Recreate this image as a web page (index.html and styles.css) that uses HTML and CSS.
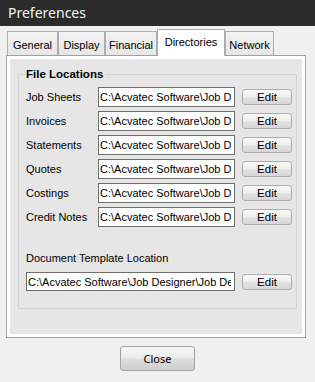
FILE: index.html
```html
<!DOCTYPE html>
<html>
<head>
  <title>Preferences</title>
  <link rel="stylesheet" href="styles.css">
</head>
<body>
  <div class="titlebar">Preferences</div>

  <!-- Tab strip -->
  <div class="tabs">
    <div class="tab tab-general">General</div>
    <div class="tab tab-display">Display</div>
    <div class="tab tab-financial">Financial</div>
    <div class="tab tab-directories active">Directories</div>
    <div class="tab tab-network">Network</div>
  </div>

  <!-- Directories page -->
  <div class="page">
    <div class="page-inner">
      <fieldset class="group">
        <legend>File Locations</legend>

        <div class="paths">
          <label for="jobSheets">Job Sheets</label>
          <input type="text" id="jobSheets" class="path" value="C:\Acvatec Software\Job Designer\Job Sheets">
          <button class="edit">Edit</button>

          <label for="invoices">Invoices</label>
          <input type="text" id="invoices" class="path" value="C:\Acvatec Software\Job Designer\Invoices">
          <button class="edit">Edit</button>

          <label for="statements">Statements</label>
          <input type="text" id="statements" class="path" value="C:\Acvatec Software\Job Designer\Statements">
          <button class="edit">Edit</button>

          <label for="quotes">Quotes</label>
          <input type="text" id="quotes" class="path" value="C:\Acvatec Software\Job Designer\Quotes">
          <button class="edit">Edit</button>

          <label for="costings">Costings</label>
          <input type="text" id="costings" class="path" value="C:\Acvatec Software\Job Designer\Costings">
          <button class="edit">Edit</button>

          <label for="creditNotes">Credit Notes</label>
          <input type="text" id="creditNotes" class="path" value="C:\Acvatec Software\Job Designer\Credit Notes">
          <button class="edit">Edit</button>
        </div>

        <label for="template" class="template-label">Document Template Location</label>
        <div class="template-row">
          <input type="text" id="template" class="path template" value="C:\Acvatec Software\Job Designer\Job Designer Templates">
          <button class="edit">Edit</button>
        </div>
      </fieldset>
    </div>
  </div>

  <div class="footer">
    <button class="close">Close</button>
  </div>
</body>
</html>
```

FILE: styles.css
```css
body {
  margin: 0;
  width: 315px;
  height: 382px;
  background-color: #f0f0f0;
  font-family: "Liberation Sans", Arial, sans-serif;
  font-size: 11px;
  color: #000;
  overflow: hidden;
}

.titlebar {
  height: 26px;
  padding: 0 0 2px 8px;
  box-sizing: border-box;
  display: flex;
  align-items: center;
  background-color: #2b2b2b;
  color: #f2f2f2;
  font-family: "Noto Sans", sans-serif;
  font-size: 14px;
}

/* tabs */
.tabs {
  height: 29px;
  display: flex;
  align-items: flex-end;
  padding-left: 7px;
}

.tab {
  height: 24px;
  box-sizing: border-box;
  padding-top: 2px;
  display: flex;
  align-items: center;
  justify-content: center;
  border: 1px solid #acacac;
  border-bottom: none;
  background: linear-gradient(#f3f3f3, #e6e6e6);
}

.tab-general { width: 51px; }
.tab-display { width: 47px; }
.tab-financial { width: 52px; }
.tab-directories { width: 68px; }
.tab-network { width: 49px; }

.tab.active {
  height: 27px;
  margin-bottom: -1px;
  padding-top: 0;
  padding-bottom: 2px;
  background: #fff;
  position: relative;
  z-index: 1;
}

/* page */
.page {
  margin-left: 6px;
  width: 300px;
  height: 283px;
  box-sizing: border-box;
  border: 1px solid #a0a0a0;
  padding: 3px;
  background-color: #fff;
}

.page-inner {
  height: 100%;
  box-sizing: border-box;
  padding: 8px 5px 0 8px;
  background-color: #e6e6e6;
}

.group {
  margin: 0;
  height: 242px;
  box-sizing: border-box;
  border: 1px solid #d2d2d2;
  padding: 0 4px 0 7px;
}

.group legend {
  padding: 0 2px 0 0;
  font-weight: bold;
  font-size: 11.5px;
  line-height: 14px;
}

.paths {
  margin-top: 6px;
  display: grid;
  grid-template-columns: 65px 137px 50px;
  grid-auto-rows: 20px;
  column-gap: 7px;
  row-gap: 4px;
  align-items: center;
}

.path {
  height: 20px;
  box-sizing: border-box;
  margin: 0;
  padding: 0 3px 0 1px;
  border: 1px solid #6e6e6e;
  background-color: #fff;
  font-family: "Liberation Sans", Arial, sans-serif;
  font-size: 11px;
  color: #000;
  outline: none;
}

.template-label {
  display: block;
  margin-top: 24px;
  line-height: 14px;
}

.template-row {
  margin-top: 7px;
  display: flex;
  align-items: center;
  gap: 7px;
}

.path.template {
  width: 209px;
  height: 19px;
}

.edit {
  width: 50px;
  height: 16px;
  margin: 0;
  padding: 0;
  border: 1px solid #adadad;
  border-radius: 3px;
  background: linear-gradient(#f9f9f9, #efefef 45%, #e2e2e2 55%, #d7d7d7);
  font-family: "Liberation Sans", Arial, sans-serif;
  font-size: 11.5px;
  line-height: 14px;
  color: #000;
}

/* footer */
.footer {
  margin-top: 8px;
  display: flex;
  justify-content: center;
}

.close {
  width: 75px;
  height: 25px;
  margin: 0;
  padding: 0;
  border: 1px solid #a3a3a3;
  border-radius: 3px;
  background: linear-gradient(#f6f6f6, #ececec 45%, #dcdcdc 55%, #cfcfcf);
  font-family: "Noto Sans", sans-serif;
  font-size: 11px;
  color: #000;
}
```
